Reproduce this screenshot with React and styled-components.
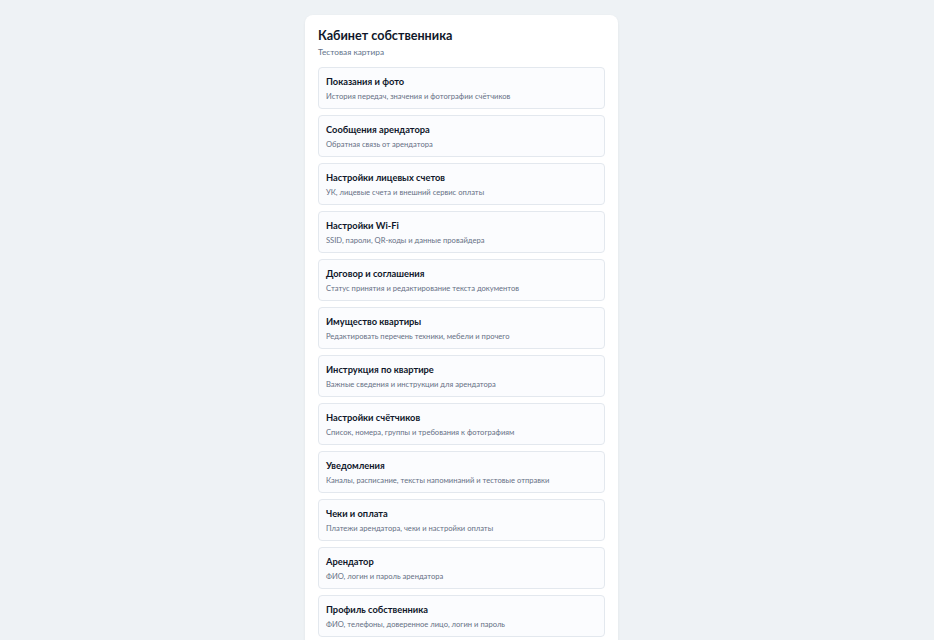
import React from "react";
import styled, { createGlobalStyle } from "styled-components";

const GlobalStyle = createGlobalStyle`
  html, body {
    margin: 0;
    background: #eef2f5;
    font-family: Lato, "Noto Sans", sans-serif;
    color: #0f172a;
  }
`;

const Page = styled.div`
  display: flex;
  justify-content: center;
  padding: 15px 11px 0 0;
`;

const Card = styled.div`
  width: 313px;
  box-sizing: border-box;
  background: #ffffff;
  border-radius: 8px;
  box-shadow: 0 1px 3px rgba(15, 23, 42, 0.06);
  padding: 12px 13px 12px;
`;

const Title = styled.h1`
  margin: 0;
  font-size: 12.6px;
  font-weight: 700;
  line-height: 18px;
  color: #0f172a;
`;

const Subtitle = styled.div`
  margin-top: 2px;
  font-size: 8.3px;
  line-height: 11px;
  color: #64748b;
`;

const List = styled.div`
  margin-top: 9px;
  display: flex;
  flex-direction: column;
  gap: 6px;
`;

const Item = styled.div`
  box-sizing: border-box;
  height: 42px;
  padding: 8px 7px 0;
  background: #fbfcfe;
  border: 1px solid #e3e8ee;
  border-radius: 4px;
`;

const ItemTitle = styled.div`
  font-size: 9.3px;
  font-weight: 700;
  line-height: 12px;
  color: #0f172a;
`;

const ItemDesc = styled.div`
  margin-top: 3px;
  font-size: 7.6px;
  line-height: 11px;
  color: #667085;
`;

const items = [
  ["Показания и фото", "История передач, значения и фотографии счётчиков"],
  ["Сообщения арендатора", "Обратная связь от арендатора"],
  ["Настройки лицевых счетов", "УК, лицевые счета и внешний сервис оплаты"],
  ["Настройки Wi-Fi", "SSID, пароли, QR-коды и данные провайдера"],
  ["Договор и соглашения", "Статус принятия и редактирование текста документов"],
  ["Имущество квартиры", "Редактировать перечень техники, мебели и прочего"],
  ["Инструкция по квартире", "Важные сведения и инструкции для арендатора"],
  ["Настройки счётчиков", "Список, номера, группы и требования к фотографиям"],
  ["Уведомления", "Каналы, расписание, тексты напоминаний и тестовые отправки"],
  ["Чеки и оплата", "Платежи арендатора, чеки и настройки оплаты"],
  ["Арендатор", "ФИО, логин и пароль арендатора"],
  ["Профиль собственника", "ФИО, телефоны, доверенное лицо, логин и пароль"],
];

export default function App() {
  return (
    <>
      <GlobalStyle />
      <Page>
        <Card>
          <Title>Кабинет собственника</Title>
          <Subtitle>Тестовая картира</Subtitle>
          <List>
            {items.map(([t, d]) => (
              <Item key={t}>
                <ItemTitle>{t}</ItemTitle>
                <ItemDesc>{d}</ItemDesc>
              </Item>
            ))}
          </List>
        </Card>
      </Page>
    </>
  );
}
